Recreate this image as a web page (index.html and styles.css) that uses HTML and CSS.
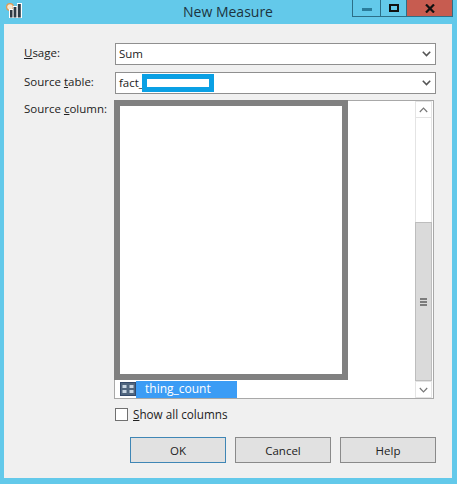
FILE: index.html
```html
<!DOCTYPE html>
<html lang="en">
<head>
    <meta charset="UTF-8">
    <meta name="viewport" content="width=device-width, initial-scale=1.0">
    <title>New Measure</title>
    <link rel="stylesheet" href="styles.css">
</head>
<body>
    <div class="window">
        <div class="titlebar">
            <svg class="app-icon" width="16" height="15" viewBox="0 0 16 15">
                <circle cx="4" cy="4" r="3.4" fill="#f6e7d2" stroke="#dd9a55" stroke-width="1.2"/>
                <rect x="3" y="6" width="4" height="9" fill="#fff"/>
                <rect x="4" y="7" width="2.5" height="7.5" fill="#2f3b45"/>
                <rect x="7" y="3" width="4" height="12" fill="#fff"/>
                <rect x="7.6" y="4" width="2.8" height="10.5" fill="#2f3b45"/>
                <rect x="11" y="0" width="5" height="15" fill="#fff"/>
                <rect x="11.8" y="1" width="3" height="13.5" fill="#2f3b45"/>
            </svg>
            <div class="title">New Measure</div>
            <div class="caption-buttons">
                <div class="caption-btn min"><span class="min-glyph"></span></div>
                <div class="caption-btn max"><span class="max-glyph"></span></div>
                <div class="caption-btn close">
                    <svg width="10" height="9" viewBox="0 0 10 9"><path d="M1 0.5 L9 8.5 M9 0.5 L1 8.5" stroke="#111" stroke-width="2.2"/></svg>
                </div>
            </div>
        </div>
        <div class="client">
            <div class="form-row row-usage">
                <label><u>U</u>sage:</label>
                <div class="combo">
                    <span>Sum</span>
                    <svg class="chev" width="9" height="6" viewBox="0 0 9 6"><path d="M0.8 0.8 L4.5 4.5 L8.2 0.8" fill="none" stroke="#555" stroke-width="1.6"/></svg>
                </div>
            </div>
            <div class="form-row row-table">
                <label>Source <u>t</u>able:</label>
                <div class="combo">
                    <span>fact_</span>
                    <span class="redact-blue"></span>
                    <svg class="chev" width="9" height="6" viewBox="0 0 9 6"><path d="M0.8 0.8 L4.5 4.5 L8.2 0.8" fill="none" stroke="#555" stroke-width="1.6"/></svg>
                </div>
            </div>
            <div class="form-row row-column">
                <label>Source <u>c</u>olumn:</label>
                <div class="listbox">
                    <div class="list-items">
                        <div class="redact-gray"></div>
                        <div class="list-item">
                            <svg class="col-icon" width="16" height="14" viewBox="0 0 16 14">
                                <rect width="16" height="14" fill="#34496a"/>
                                <rect x="1" y="1" width="14" height="12" fill="#51667f"/>
                                <rect x="2.5" y="3" width="4" height="3" fill="#c9d6e3"/>
                                <rect x="2.5" y="8" width="4" height="3" fill="#c9d6e3"/>
                                <rect x="9.5" y="3" width="4" height="3" fill="#c9d6e3"/>
                                <rect x="9.5" y="8" width="4" height="3" fill="#c9d6e3"/>
                            </svg>
                            <span class="selected">thing_count</span>
                        </div>
                    </div>
                    <div class="scrollbar">
                        <div class="sb-arrow">
                            <svg width="9" height="6" viewBox="0 0 9 6"><path d="M0.8 5 L4.5 1.2 L8.2 5" fill="none" stroke="#777" stroke-width="1.2"/></svg>
                        </div>
                        <div class="sb-track"></div>
                        <div class="sb-thumb">
                            <span class="grip"></span>
                        </div>
                        <div class="sb-arrow">
                            <svg width="9" height="6" viewBox="0 0 9 6"><path d="M0.8 1 L4.5 4.8 L8.2 1" fill="none" stroke="#777" stroke-width="1.2"/></svg>
                        </div>
                    </div>
                </div>
            </div>
            <div class="show-all">
                <span class="checkbox"></span>
                <span><u>S</u>how all columns</span>
            </div>
            <div class="buttons">
                <button class="default">OK</button>
                <button>Cancel</button>
                <button>Help</button>
            </div>
        </div>
    </div>
</body>
</html>
```

FILE: styles.css
```css
html, body {
    margin: 0;
    padding: 0;
}

body {
    width: 457px;
    height: 484px;
    overflow: hidden;
    font-family: "Open Sans", "Noto Sans", sans-serif;
    font-size: 11.5px;
    color: #222;
}

.window {
    height: 484px;
    background-color: #63c9ea;
    padding: 0 5px 6px 4px;
    box-sizing: border-box;
    display: flex;
    flex-direction: column;
}

.titlebar {
    height: 24px;
    flex: none;
    display: flex;
    position: relative;
}

.app-icon {
    position: absolute;
    left: 2px;
    top: 3px;
}

.title {
    width: 448px;
    text-align: center;
    font-size: 14px;
    line-height: 21px;
    color: #1c3440;
    padding-top: 1px;
}

.caption-buttons {
    position: absolute;
    top: 0;
    right: -1px;
    display: flex;
    height: 16px;
    border: 1px solid #2c6f88;
    border-top: none;
}

.caption-btn {
    display: flex;
    align-items: center;
    justify-content: center;
    height: 16px;
    width: 27px;
}

.caption-btn.max {
    border-left: 1px solid #2c6f88;
    border-right: 1px solid #2c6f88;
    width: 25px;
}

.caption-btn.close {
    background-color: #c75c50;
    width: 45px;
}

.min-glyph {
    display: block;
    width: 10px;
    height: 3px;
    margin-top: 2px;
    background-color: #2a7d9c;
}

.max-glyph {
    display: block;
    width: 6px;
    height: 4px;
    border: 2px solid #111;
}

.client {
    flex: 1;
    background-color: #f0f0f0;
    padding: 19px 16px 0 20px;
}

.form-row {
    display: flex;
}

.form-row label {
    width: 91px;
    flex: none;
    line-height: 15px;
}

.row-usage {
    height: 22px;
    margin-bottom: 7px;
}

.row-table {
    height: 22px;
    margin-bottom: 6px;
}

.row-usage label,
.row-table label {
    padding-top: 2px;
}

.row-column label {
    padding-top: 1px;
    width: 90px;
}

.combo {
    flex: 1;
    height: 22px;
    box-sizing: border-box;
    border: 1px solid #8f8f8f;
    background-color: #fff;
    padding-left: 3px;
    line-height: 20px;
    display: flex;
    align-items: center;
    position: relative;
}

.chev {
    position: absolute;
    right: 4px;
    top: 7px;
}

.redact-blue {
    flex: none;
    width: 72px;
    height: 18px;
    box-sizing: border-box;
    border: 5px solid #0aa0e4;
    background-color: #fff;
    margin-left: -2px;
}

.listbox {
    width: 320px;
    height: 299px;
    box-sizing: border-box;
    border: 1px solid #a8a8a8;
    background-color: #fff;
    display: flex;
    justify-content: space-between;
}

.list-items {
    flex: 1;
    display: flex;
    flex-direction: column;
}

/* painted over the real list rows */
.redact-gray {
    width: 234px;
    height: 280px;
    box-sizing: border-box;
    border: 6px solid #808080;
    background-color: #fff;
    margin-top: -1px;
    margin-left: -1px;
}

.list-item {
    display: flex;
    align-items: center;
    height: 18px;
    padding-left: 5px;
}

.col-icon {
    flex: none;
}

.selected {
    background-color: #3b9cf5;
    color: #fff;
    width: 101px;
    height: 17px;
    line-height: 16px;
    padding-left: 9px;
    box-sizing: border-box;
    font-size: 12px;
}

.scrollbar {
    width: 17px;
    margin-right: 1px;
    display: flex;
    flex-direction: column;
    flex: none;
}

.sb-arrow {
    height: 17px;
    flex: none;
    box-sizing: border-box;
    border: 1px solid #e4e4e4;
    display: flex;
    align-items: center;
    justify-content: center;
}

.sb-track {
    height: 104px;
    flex: none;
    border-left: 1px solid #e4e4e4;
    border-right: 1px solid #e4e4e4;
}

.sb-thumb {
    flex: 1;
    background-color: #dadada;
    border: 1px solid #bdbdbd;
    display: flex;
    align-items: center;
    justify-content: center;
}

.grip {
    display: block;
    width: 7px;
    height: 8px;
    background: repeating-linear-gradient(#7c7c7c 0, #7c7c7c 2px, #dadada 2px, #dadada 3px);
}

.show-all {
    display: flex;
    align-items: center;
    height: 14px;
    margin-top: 8px;
    margin-left: 91px;
    gap: 5px;
    font-size: 11.7px;
}

.checkbox {
    width: 13px;
    height: 13px;
    box-sizing: border-box;
    border: 1px solid #707070;
    background-color: #fff;
}

.buttons {
    display: flex;
    justify-content: flex-end;
    gap: 9px;
    margin-top: 16px;
}

button {
    width: 96px;
    height: 26px;
    box-sizing: border-box;
    border: 1px solid #8a8a8a;
    background-color: #e1e1e1;
    font-family: inherit;
    font-size: 11.5px;
    color: #222;
    padding: 0;
}

button.default {
    border-color: #3f86b5;
}
```
